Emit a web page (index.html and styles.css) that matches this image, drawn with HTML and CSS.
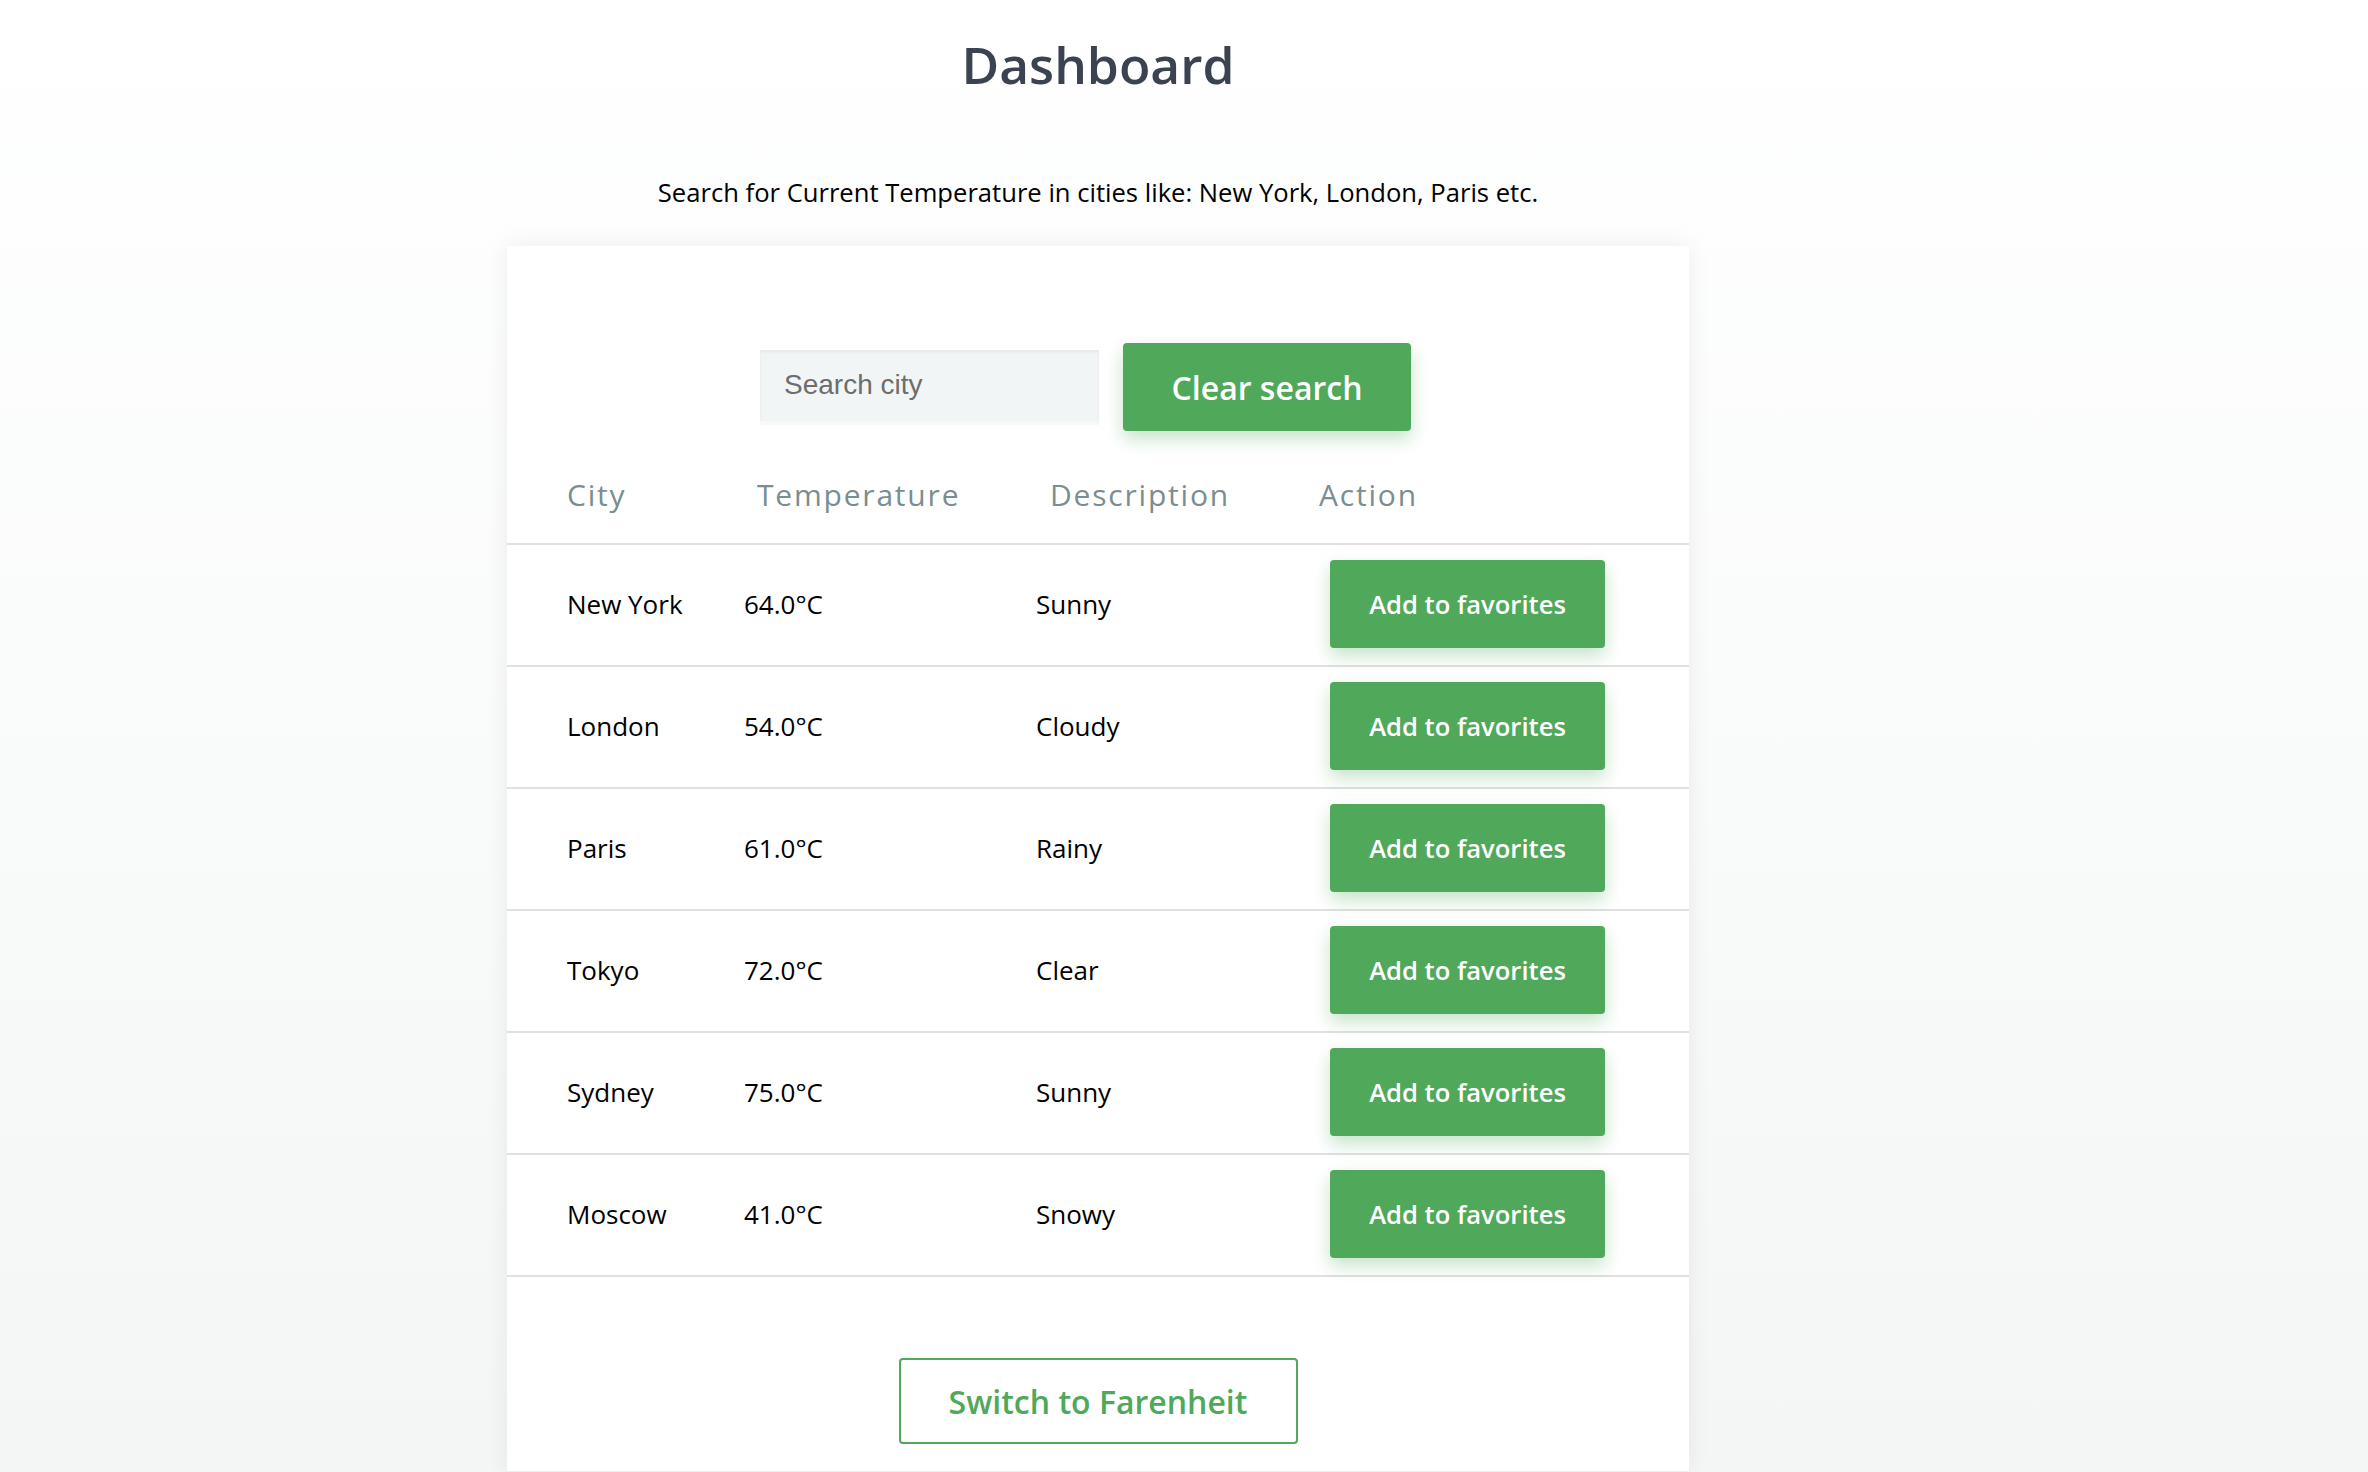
FILE: index.html
```html
<!DOCTYPE html>
<html lang="en">
<head>
<meta charset="utf-8">
<title>Dashboard</title>
<link rel="stylesheet" href="styles.css">
</head>
<body>
<main class="page">
  <h1 class="title">Dashboard</h1>
  <p class="subtitle">Search for Current Temperature in cities like: New York, London, Paris etc.</p>
  <section class="card">
    <div class="search-row">
      <input class="search-input" type="text" placeholder="Search city">
      <button class="btn btn-solid btn-clear">Clear search</button>
    </div>
    <div class="table">
      <div class="thead">
        <span>City</span><span>Temperature</span><span>Description</span><span>Action</span>
      </div>
      <div class="trow"><span>New York</span><span>64.0°C</span><span>Sunny</span><button class="btn btn-solid btn-fav">Add to favorites</button></div>
      <div class="trow"><span>London</span><span>54.0°C</span><span>Cloudy</span><button class="btn btn-solid btn-fav">Add to favorites</button></div>
      <div class="trow"><span>Paris</span><span>61.0°C</span><span>Rainy</span><button class="btn btn-solid btn-fav">Add to favorites</button></div>
      <div class="trow"><span>Tokyo</span><span>72.0°C</span><span>Clear</span><button class="btn btn-solid btn-fav">Add to favorites</button></div>
      <div class="trow"><span>Sydney</span><span>75.0°C</span><span>Sunny</span><button class="btn btn-solid btn-fav">Add to favorites</button></div>
      <div class="trow"><span>Moscow</span><span>41.0°C</span><span>Snowy</span><button class="btn btn-solid btn-fav">Add to favorites</button></div>
    </div>
    <div class="footer">
      <button class="btn btn-outline">Switch to Farenheit</button>
    </div>
  </section>
</main>
</body>
</html>
```
FILE: styles.css
```css
html, body {
  margin: 0;
  padding: 0;
}
body {
  min-height: 1472px;
  background: linear-gradient(to bottom, #ffffff 0%, #f4f6f6 100%);
  font-family: "Open Sans", "Noto Sans", sans-serif;
  overflow: hidden;
}
.page {
  width: 2196px;
  display: flex;
  flex-direction: column;
  align-items: center;
}
.title {
  margin: 32px 0 0;
  font-size: 51.5px;
  line-height: 64px;
  font-weight: 600;
  color: #3b4351;
}
.subtitle {
  margin: 79px 0 0;
  font-size: 25.6px;
  line-height: 36px;
  color: #000;
}
.card {
  margin-top: 35px;
  width: 1182px;
  box-sizing: border-box;
  background: #fff;
  box-shadow: 0 0 22px rgba(0, 0, 0, 0.07);
  padding: 97px 0 27px;
}
.search-row {
  display: flex;
  justify-content: center;
  align-items: center;
  gap: 24px;
  padding-right: 25px;
}
.search-input {
  width: 339px;
  height: 75px;
  box-sizing: border-box;
  border: none;
  border-bottom: 4px solid #f7f9f9;
  background: #f2f5f6;
  box-shadow: inset 0 2px 3px rgba(0, 0, 0, 0.06);
  padding: 0 24px;
  font-family: "Liberation Sans", Arial, sans-serif;
  font-size: 28px;
  color: #333;
  outline: none;
}
.search-input::placeholder {
  color: #6d6d6d;
}
.btn {
  font-family: "Open Sans", "Noto Sans", sans-serif;
  font-weight: 600;
  border-radius: 4px;
  cursor: pointer;
  padding: 0;
}
.btn-solid {
  background: #50a85a;
  color: #fff;
  border: none;
  box-shadow: 0 8px 18px rgba(80, 168, 90, 0.32);
}
.btn-clear {
  width: 288px;
  height: 88px;
  font-size: 32px;
}
.thead {
  display: grid;
  grid-template-columns: 190px 293px 269px auto;
  padding: 44px 0 28px 60px;
  font-size: 30px;
  line-height: 40px;
  letter-spacing: 1.8px;
  color: #7a8d90;
  border-bottom: 2px solid #e0e0e0;
}
.trow {
  display: grid;
  grid-template-columns: 177px 292px 294px auto;
  align-items: center;
  height: 122px;
  box-sizing: border-box;
  padding-left: 60px;
  padding-bottom: 2px;
  border-bottom: 2px solid #e0e0e0;
  font-size: 26px;
  line-height: 36px;
  color: #000;
}
.btn-fav {
  width: 275px;
  height: 88px;
  font-size: 25.6px;
}
.footer {
  display: flex;
  justify-content: center;
  padding-top: 81px;
}
.btn-outline {
  width: 399px;
  height: 86px;
  box-sizing: border-box;
  background: #fff;
  border: 2px solid #50a85a;
  color: #50a85a;
  font-size: 32px;
}
```
